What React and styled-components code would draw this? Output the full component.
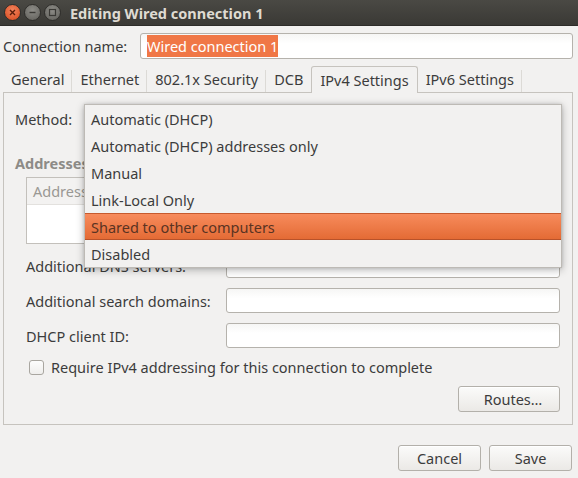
import React from "react";
import styled, { createGlobalStyle } from "styled-components";

const Global = createGlobalStyle`
  html, body { margin: 0; padding: 0; background: #f2f1f0; }
  * { box-sizing: border-box; }
  body { font-family: "Noto Sans", "Open Sans", sans-serif; font-size: 14.5px; color: #3c3c3c; }
`;

const Window = styled.div`
  width: 578px;
  height: 478px;
  background: #f2f1f0;
  display: flex;
  flex-direction: column;
  overflow: hidden;
`;

const TitleBar = styled.div`
  height: 26px;
  flex: none;
  display: flex;
  align-items: center;
  padding-left: 4px;
  gap: 2px;
  background: linear-gradient(#4a4944, #3a3935);
  border-bottom: 1px solid #2d2c29;
`;

const WinButton = styled.div`
  width: 17px;
  height: 17px;
  border-radius: 50%;
  display: flex;
  align-items: center;
  justify-content: center;
  background: ${(p) =>
    p.$close
      ? "radial-gradient(circle at 50% 35%, #f3845e, #df5a2f 70%, #b9441f)"
      : "radial-gradient(circle at 50% 35%, #8d8c87, #6d6c67 70%, #55544f)"};
  border: 1px solid #2f2e2b;
  margin-right: 1px;
`;

const Title = styled.div`
  margin-left: 6px;
  font-weight: bold;
  font-size: 14.5px;
  color: #dfdbd2;
`;

const NameRow = styled.div`
  display: flex;
  align-items: center;
  margin-top: 7px;
  padding: 0 5px 0 3px;
`;

const NameLabel = styled.div`
  width: 137px;
  flex: none;
`;

const Entry = styled.div`
  flex: ${(p) => (p.$grow ? 1 : "none")};
  height: ${(p) => p.$h || 26}px;
  background: linear-gradient(#f6f6f5, #ffffff 40%);
  border: 1px solid #b5b2ac;
  border-radius: 3px;
  display: flex;
  align-items: center;
  padding-left: 6px;
`;

const Selected = styled.span`
  background: #f07746;
  color: #ffffff;
  padding: 1px 0;
`;

const Notebook = styled.div`
  margin: 7px 5px 0 3px;
  display: flex;
  flex-direction: column;
`;

const TabBar = styled.div`
  display: flex;
  align-items: flex-end;
  height: 26px;
  position: relative;
  z-index: 1;
`;

const Tab = styled.div`
  height: ${(p) => (p.$active ? 27 : 26)}px;
  margin-bottom: ${(p) => (p.$active ? -1 : 0)}px;
  padding: 0 8px;
  padding-bottom: ${(p) => (p.$active ? 1 : 0)}px;
  display: flex;
  align-items: center;
  background: #f2f1f0;
  border: ${(p) => (p.$active ? "1px solid #c6c3be" : "none")};
  border-bottom: none;
  border-radius: ${(p) => (p.$active ? "3px 3px 0 0" : "0")};
  position: relative;
  ${(p) =>
    p.$sep &&
    `
    &::after { content: ""; position: absolute; right: 0; top: 4px; bottom: 0; width: 1px; background: #dcdad6; }
  `}
`;

const Panel = styled.div`
  position: relative;
  height: 333px;
  border: 1px solid #c6c3be;
  display: flex;
  flex-direction: column;
  padding: 13px 12px 11px 11px;
`;

const MethodRow = styled.div`
  display: flex;
  align-items: center;
  height: 26px;
`;

const MethodLabel = styled.div`
  width: 69px;
`;

const Combo = styled.div`
  flex: 1;
  height: 26px;
  border: 1px solid #b5b2ac;
  border-radius: 3px;
  background: linear-gradient(#fbfbfa, #ebe9e6);
`;

const SectionLabel = styled.div`
  margin-top: 22px;
  font-weight: bold;
  color: #8d8b87;
  height: 18px;
  line-height: 18px;
`;

const ListBox = styled.div`
  margin: 5px 0 0 11px;
  height: 67px;
  border: 1px solid #c3c0bb;
  background: #ffffff;
  display: flex;
  flex-direction: column;
`;

const ListHeader = styled.div`
  height: 27px;
  background: #f3f2f1;
  border-bottom: 1px solid #e3e1de;
  color: #9a9894;
  display: flex;
  align-items: center;
  padding-left: 6px;
`;

const FormGrid = styled.div`
  margin: 9px 0 0 11px;
  display: grid;
  grid-template-columns: 200px 1fr;
  row-gap: 10px;
  align-items: center;
`;

const CheckRow = styled.div`
  margin: 11px 0 0 14px;
  display: flex;
  align-items: center;
  gap: 7px;
  height: 16px;
`;

const CheckBox = styled.div`
  width: 15px;
  height: 15px;
  border: 1px solid #a9a6a0;
  border-radius: 3px;
  background: linear-gradient(#fdfdfd, #efeeec);
`;

const ButtonRow = styled.div`
  display: flex;
  justify-content: flex-end;
  gap: 8px;
  margin-top: ${(p) => p.$mt || 0}px;
  padding-right: ${(p) => p.$pr || 0}px;
`;

const Button = styled.div`
  width: ${(p) => p.$w}px;
  height: 26px;
  border: 1px solid #b3b0aa;
  border-radius: 3px;
  background: linear-gradient(#fbfbfa, #ebe9e6);
  box-shadow: inset 0 1px 0 #ffffff;
  display: flex;
  align-items: center;
  justify-content: center;
  padding-left: ${(p) => p.$pl || 0}px;
`;

const Menu = styled.div`
  position: absolute;
  left: 80px;
  top: 11px;
  width: 478px;
  background: #f2f1f0;
  border: 1px solid #bdbab5;
  box-shadow: 0 2px 8px rgba(0, 0, 0, 0.28), 0 0 3px rgba(0, 0, 0, 0.12);
  z-index: 5;
  display: flex;
  flex-direction: column;
`;

const MenuItem = styled.div`
  height: 27px;
  display: flex;
  align-items: center;
  padding-left: 6px;
  color: ${(p) => (p.$hl ? "#5a3322" : "#3c3c3c")};
  background: ${(p) => (p.$hl ? "linear-gradient(#f78b5c, #e46b35)" : "transparent")};
  border-top: 1px solid ${(p) => (p.$hl ? "#c65a2e" : "transparent")};
  border-bottom: 1px solid ${(p) => (p.$hl ? "#b8522a" : "transparent")};
`;

const tabs = [
  { label: "General", sep: true },
  { label: "Ethernet", sep: true },
  { label: "802.1x Security", sep: true },
  { label: "DCB", sep: false },
  { label: "IPv4 Settings", active: true },
  { label: "IPv6 Settings", sep: true },
];

const methods = [
  "Automatic (DHCP)",
  "Automatic (DHCP) addresses only",
  "Manual",
  "Link-Local Only",
  "Shared to other computers",
  "Disabled",
];

export default function App() {
  return (
    <Window>
      <Global />
      <TitleBar>
        <WinButton $close>
          <svg width="9" height="9" viewBox="0 0 9 9">
            <path d="M2 2 L7 7 M7 2 L2 7" stroke="#5a1d0a" strokeWidth="1.4" />
          </svg>
        </WinButton>
        <WinButton>
          <svg width="9" height="9" viewBox="0 0 9 9">
            <path d="M1.5 4.5 H7.5" stroke="#3a3935" strokeWidth="1.4" />
          </svg>
        </WinButton>
        <WinButton>
          <svg width="9" height="9" viewBox="0 0 9 9">
            <rect x="1.5" y="1.5" width="6" height="6" fill="none" stroke="#3a3935" strokeWidth="1.2" />
          </svg>
        </WinButton>
        <Title>Editing Wired connection 1</Title>
      </TitleBar>

      <NameRow>
        <NameLabel>Connection name:</NameLabel>
        <Entry $grow>
          <Selected>Wired connection 1</Selected>
        </Entry>
      </NameRow>

      <Notebook>
        <TabBar>
          {tabs.map((t) => (
            <Tab key={t.label} $active={t.active} $sep={t.sep}>
              {t.label}
            </Tab>
          ))}
        </TabBar>
        <Panel>
          <MethodRow>
            <MethodLabel>Method:</MethodLabel>
            <Combo />
          </MethodRow>
          <SectionLabel>Addresses</SectionLabel>
          <ListBox>
            <ListHeader>Address</ListHeader>
          </ListBox>
          <FormGrid>
            <span>Additional DNS servers:</span>
            <Entry $h={25} />
            <span>Additional search domains:</span>
            <Entry $h={25} />
            <span>DHCP client ID:</span>
            <Entry $h={25} />
          </FormGrid>
          <CheckRow>
            <CheckBox />
            <span>Require IPv4 addressing for this connection to complete</span>
          </CheckRow>
          <ButtonRow $mt={11}>
            <Button $w={102} $pl={8}>Routes…</Button>
          </ButtonRow>
          <Menu>
            {methods.map((m, i) => (
              <MenuItem key={m} $hl={i === 4}>
                {m}
              </MenuItem>
            ))}
          </Menu>
        </Panel>
      </Notebook>

      <ButtonRow $mt={20} $pr={6}>
        <Button $w={83}>Cancel</Button>
        <Button $w={83}>Save</Button>
      </ButtonRow>
    </Window>
  );
}
